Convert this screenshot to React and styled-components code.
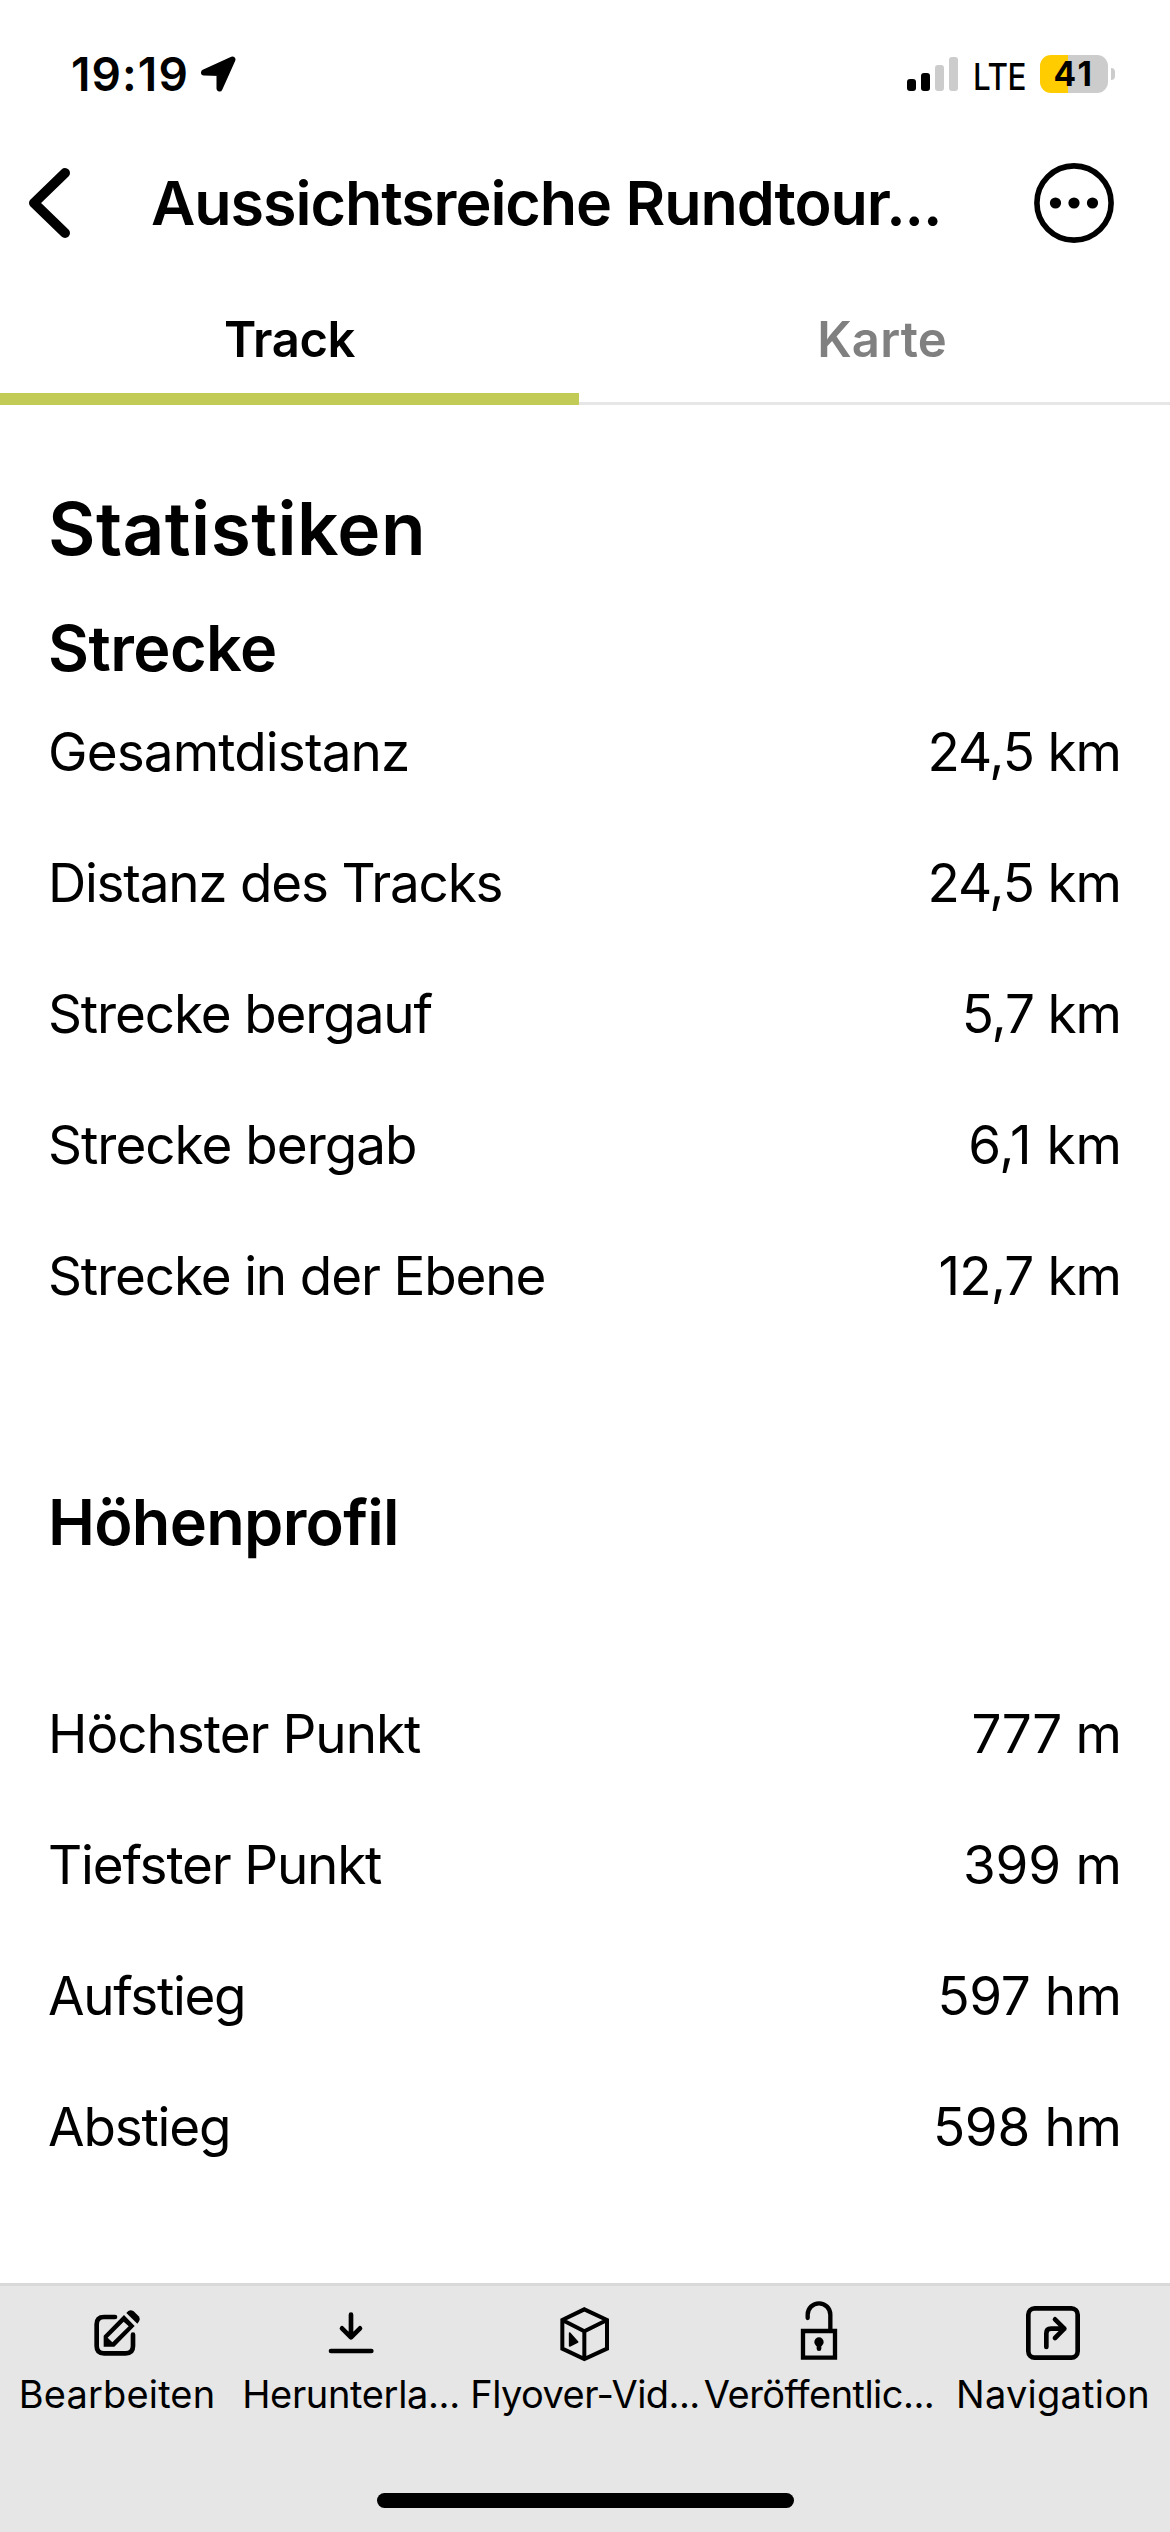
import React from 'react'
import styled, { createGlobalStyle } from 'styled-components'

const GlobalStyle = createGlobalStyle`
  * {
    box-sizing: border-box;
  }

  body {
    margin: 0;
    background-color: #fff;
    color: #000;
    font-family: Inter, 'Liberation Sans', sans-serif;
  }
`

const Page = styled.div`
  display: flex;
  flex-direction: column;
  width: 1170px;
  height: 2532px;
  overflow: hidden;
  white-space: nowrap;
`

const StatusBar = styled.div`
  display: flex;
  align-items: center;
  justify-content: space-between;
  height: 148px;
  padding: 0 55px 0 71px;
`

const StatusGroup = styled.div`
  display: flex;
  align-items: center;
`

const Time = styled.span`
  width: 128px;
  font-size: 46px;
  font-weight: 600;
  letter-spacing: 1.1px;
`

const Network = styled.span`
  width: 64.5px;
  margin: 4px 3px 0 14.5px;
  font-size: 37px;
  font-weight: 500;
  letter-spacing: -0.5px;
  transform: scaleX(0.85);
  transform-origin: left;
`

const Battery = styled.div`
  display: flex;
  align-items: center;
  justify-content: center;
  width: 68px;
  height: 38px;
  border-radius: 11px;
  background: linear-gradient(to right, #ffcc00 41%, #cccccc 41%);
  font-size: 33.5px;
  font-weight: 700;
  letter-spacing: 2.5px;
`

const BatteryCap = styled.div`
  width: 4px;
  height: 12px;
  margin-left: 3px;
  border-radius: 0 6px 6px 0;
  background-color: #cccccc;
`

const Header = styled.header`
  display: flex;
  align-items: center;
  height: 110px;
  padding: 0 56px 0 28px;
`

const Title = styled.h1`
  flex: 1;
  margin: 0 0 0 79px;
  font-size: 61px;
  font-weight: 600;
  letter-spacing: -1.06px;
`

const Tabs = styled.nav`
  display: flex;
  gap: 15px;
  height: 147px;
  border-bottom: 3px solid #e6e6e6;
`

const Tab = styled.div`
  width: ${({ $active }) => ($active ? '579px' : '576px')};
  height: 147px;
  padding-top: 40px;
  border-bottom: ${({ $active }) => ($active ? '12px solid #c2cb55' : 'none')};
  color: ${({ $active }) => ($active ? '#000' : '#808080')};
  font-size: 49px;
  font-weight: 600;
  letter-spacing: ${({ $active }) => ($active ? '-0.4px' : '0.19px')};
  line-height: 84px;
  text-align: center;
`

const Content = styled.main`
  flex: 1;
  padding: 79px 48px 0;
`

const PageHeading = styled.h2`
  margin: 0 0 39px;
  font-size: 73px;
  font-weight: 600;
  letter-spacing: 0.45px;
  line-height: 90px;
`

const SectionHeading = styled.h3`
  margin: ${({ $margin }) => $margin};
  font-size: 63px;
  font-weight: 600;
  letter-spacing: ${({ $track }) => $track}px;
  line-height: 70px;
`

const Row = styled.div`
  display: flex;
  justify-content: space-between;
  font-size: 53px;
  line-height: 131px;
`

const Cell = styled.span`
  letter-spacing: ${({ $track }) => $track}px;
  margin-right: ${({ $track }) => -$track}px;
`

const BottomBar = styled.footer`
  display: flex;
  flex-direction: column;
  align-items: center;
  height: 249px;
  border-top: 3px solid #d9d9d9;
  background-color: #e6e6e6;
`

const Actions = styled.div`
  display: grid;
  grid-template-columns: repeat(5, 234px);
  height: 207px;
  padding-top: 14px;
`

const Action = styled.div`
  display: flex;
  flex-direction: column;
  align-items: center;
  font-size: 38px;
  letter-spacing: ${({ $track }) => $track}px;
  line-height: 60px;
`

const ActionIcon = styled.svg`
  width: 64px;
  height: 64px;
  fill: none;
  stroke: #000;
  stroke-width: 14;
  stroke-linecap: round;
  stroke-linejoin: round;
`

const HomeIndicator = styled.div`
  width: 417px;
  height: 15px;
  border-radius: 8px;
  background-color: #000;
`

const distance = [
  ['Gesamtdistanz', '24,5 km', -0.86, -1.11],
  ['Distanz des Tracks', '24,5 km', -1.23, -1.11],
  ['Strecke bergauf', '5,7 km', -1.13, -1.11],
  ['Strecke bergab', '6,1 km', -1, 0],
  ['Strecke in der Ebene', '12,7 km', -1.14, -0.9],
]

const elevation = [
  ['Höchster Punkt', '777 m', -0.99, -0.74],
  ['Tiefster Punkt', '399 m', -1.19, -0.22],
  ['Aufstieg', '597 hm', -1.34, -0.46],
  ['Abstieg', '598 hm', -1.18, -0.3],
]

const EditIcon = () => (
  <ActionIcon viewBox="255 90 192 192">
    <path d="M345 141H312Q290 141 290 163V228Q290 250 312 250H377Q399 250 399 228V194" />
    <path fill="#000" stroke="none" fillRule="evenodd" d="M372 135L404 168L343 230H311V197ZM371 155L323 203L337 217L386 169Z" />
    <path fill="#000" stroke="none" d="M379 129Q388 115 401 124L416 139Q424 149 412 161Z" />
  </ActionIcon>
)

const DownloadIcon = () => (
  <ActionIcon viewBox="957 90 192 192">
    <path d="M993 243H1114M1053 134V202M1026 175L1053 202L1080 175" />
  </ActionIcon>
)

const CubeIcon = () => (
  <ActionIcon viewBox="455 90 192 192">
    <path
      strokeWidth="12"
      strokeLinecap="butt"
      strokeLinejoin="miter"
      d="M549 118L617 150V236L549 267L483 236V150ZM483 150L549 184L617 150M549 184V267"
    />
    <path fill="#000" strokeWidth="5" d="M505 189L529 216L505 228Z" />
  </ActionIcon>
)

const LockIcon = () => (
  <ActionIcon viewBox="51 90 192 192">
    <path strokeWidth="13" d="M113 144V134A34 34 0 0 1 181 134V180" />
    <path strokeWidth="13" strokeLinejoin="miter" d="M99 183H195V263H99Z" />
    <circle cx="147" cy="216" r="14" fill="#000" stroke="none" />
    <path d="M147 220V236" />
  </ActionIcon>
)

const NavigationIcon = () => (
  <ActionIcon viewBox="753 90 192 192">
    <rect x="775" y="115" width="148" height="148" rx="19" />
    <path d="M829 231V190Q829 176 843 176H883M855 148L883 176L855 204" />
  </ActionIcon>
)

const actions = [
  ['Bearbeiten', EditIcon, 0.17],
  ['Herunterla...', DownloadIcon, -0.35],
  ['Flyover-Vid...', CubeIcon, -0.55],
  ['Veröffentlic...', LockIcon, -0.53],
  ['Navigation', NavigationIcon, 0.25],
]

function Stats({ rows }) {
  return rows.map(([label, value, labelTrack, valueTrack]) => (
    <Row key={label}>
      <Cell $track={labelTrack}>{label}</Cell>
      <Cell $track={valueTrack}>{value}</Cell>
    </Row>
  ))
}

function App() {
  return (
    <Page>
      <GlobalStyle />
      <StatusBar>
        <StatusGroup>
          <Time>19:19</Time>
          <svg width="40" height="40" viewBox="199 55 40 40">
            <path d="M204 73.5L232.5 60.5L219.5 89.5V74Z" stroke="#000" strokeWidth="6" strokeLinejoin="round" />
          </svg>
        </StatusGroup>
        <StatusGroup>
          <svg width="51" height="36" viewBox="907 56 51 36">
            <rect x="907" y="79" width="9" height="12" rx="3" />
            <rect x="921" y="73" width="9" height="18" rx="3" />
            <rect x="935" y="65" width="9" height="26" rx="3" fill="#ccc" />
            <rect x="949" y="57" width="9" height="34" rx="3" fill="#ccc" />
          </svg>
          <Network>LTE</Network>
          <Battery>41</Battery>
          <BatteryCap />
        </StatusGroup>
      </StatusBar>

      <Header>
        <svg width="44" height="72" viewBox="28 167 44 72" fill="none">
          <path d="M65 173L34 203L65 233" stroke="#000" strokeWidth="10" strokeLinecap="round" strokeLinejoin="round" />
        </svg>
        <Title>Aussichtsreiche Rundtour...</Title>
        <svg width="80" height="80" viewBox="0 0 80 80">
          <circle cx="40" cy="40" r="37.1" fill="none" stroke="#000" strokeWidth="5.6" />
          <circle cx="21.5" cy="40" r="5.6" />
          <circle cx="40" cy="40" r="5.6" />
          <circle cx="58.5" cy="40" r="5.6" />
        </svg>
      </Header>

      <Tabs>
        <Tab $active>Track</Tab>
        <Tab>Karte</Tab>
      </Tabs>

      <Content>
        <PageHeading>Statistiken</PageHeading>
        <SectionHeading $track={-0.54} $margin="0 0 4px">Strecke</SectionHeading>
        <Stats rows={distance} />
        <SectionHeading $track={-0.73} $margin="145px 0 112px">Höhenprofil</SectionHeading>
        <Stats rows={elevation} />
      </Content>

      <BottomBar>
        <Actions>
          {actions.map(([label, Icon, track]) => (
            <Action key={label} $track={track}>
              <Icon />
              {label}
            </Action>
          ))}
        </Actions>
        <HomeIndicator />
      </BottomBar>
    </Page>
  )
}

export default App
